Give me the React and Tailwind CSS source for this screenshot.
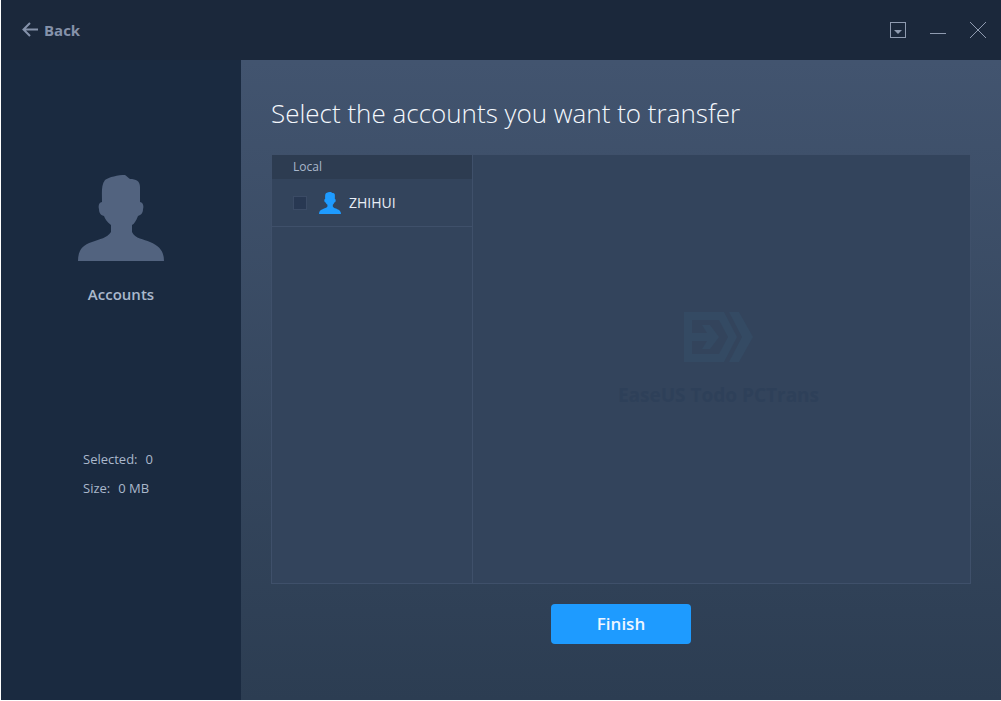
import { useState } from "react";

const accounts = [{ id: "zhihui", name: "ZHIHUI" }];

const PersonIcon = ({ className }) => (
  <svg viewBox="0 0 86 86" className={className} fill="currentColor" aria-hidden="true">
    <path d="M24 27C24 18 23 10 27 5C31 2 40 0 47 0C49 1 50 3 52 4C58 4 62 6 62 12V27C65 27 66 31 65 34C65 38 63 40 60 41C58 46 56 49 54 50V57C57 64 66 64 72 67C82 71 86 77 86 86H0C0 76 4 70 14 67C22 64 29 63 33 57V50C29 47 27 44 26 41C22 40 21 37 21 34C20 31 21 27 24 27Z" />
  </svg>
);

const BrandMark = () => (
  <svg width="70" height="52" viewBox="0 0 70 52" fill="currentColor" className="text-[#344a63]" aria-hidden="true">
    <path d="M0 1H40L53 26L40 51H0V30H8V43H35L44 26L35 9H8V22H0Z" />
    <path d="M0 22H23L18 14H26L35 26L26 38H18L23 30H0Z" />
    <path d="M45 1H55L69 26L55 51H45L58 26Z" />
  </svg>
);

const TitleBar = () => (
  <header className="flex h-15 items-center justify-between bg-[#1b283b] pr-[15px] pl-[21px] text-[#8592aa]">
    <button type="button" className="flex items-center gap-[5px] text-[15px] font-bold">
      <svg width="17" height="16" viewBox="0 0 17 16" fill="none" stroke="currentColor" strokeWidth="2" aria-hidden="true">
        <path d="M8 1L1.5 7.5L8 14M1.5 7.5H16" />
      </svg>
      Back
    </button>
    <div className="flex items-center gap-6 text-[#8f9bb0]">
      <button type="button" aria-label="Menu">
        <svg width="16" height="16" viewBox="0 0 16 16" fill="none" stroke="currentColor" aria-hidden="true">
          <rect x="0.5" y="0.5" width="15" height="15" />
          <path d="M4 8H12L8 12Z" fill="currentColor" stroke="none" />
        </svg>
      </button>
      <button type="button" aria-label="Minimize">
        <svg width="16" height="16" viewBox="0 0 16 16" stroke="currentColor" aria-hidden="true">
          <path d="M0 11.5H16" />
        </svg>
      </button>
      <button type="button" aria-label="Close">
        <svg width="16" height="16" viewBox="0 0 16 16" stroke="currentColor" aria-hidden="true">
          <path d="M0 0L16 16M16 0L0 16" />
        </svg>
      </button>
    </div>
  </header>
);

const Sidebar = ({ count }) => (
  <aside className="flex w-60 shrink-0 flex-col items-center bg-[#1a2a40] pt-[115px] text-[#aab8cc]">
    <PersonIcon className="size-[86px] text-[#52637f]" />
    <h2 className="mt-[21px] text-[15px] leading-6 font-semibold">Accounts</h2>
    <dl className="mt-[139px] w-[76px] text-[13px] leading-[29px] whitespace-nowrap">
      <div className="flex gap-2">
        <dt>Selected:</dt>
        <dd>{count}</dd>
      </div>
      <div className="flex gap-2">
        <dt>Size:</dt>
        <dd>0 MB</dd>
      </div>
    </dl>
  </aside>
);

export default function App() {
  const [selected, setSelected] = useState([]);

  const toggle = (id) => {
    setSelected((prev) =>
      prev.includes(id) ? prev.filter((item) => item !== id) : [...prev, id]
    );
  };

  return (
    <div className="flex min-h-screen flex-col bg-white pb-px pl-px font-['Open_Sans','Noto_Sans',sans-serif]">
      <TitleBar />
      <div className="flex flex-1">
        <Sidebar count={selected.length} />
        <main className="flex min-w-0 flex-1 flex-col bg-linear-to-b from-[#42546f] to-[#2c3d52] px-[30px] pt-8 pb-14">
          <h1 className="text-[26px] leading-[42px] font-light text-[#f4f8fd]">
            Select the accounts you want to transfer
          </h1>

          <div className="mt-5 flex flex-1 border border-[#3f506a] bg-[#33445c]">
            <section className="w-[201px] shrink-0 border-r border-[#3f506a]">
              <h3 className="bg-[#2d3c51] pl-[21px] text-xs leading-6 text-[#aab8cc]">Local</h3>
              <ul>
                {accounts.map((account) => (
                  <li key={account.id} className="border-b border-[#3f506a]">
                    <label className="flex h-[47px] items-center pl-[21px] text-sm text-[#e9eef6]">
                      <input
                        type="checkbox"
                        checked={selected.includes(account.id)}
                        onChange={() => toggle(account.id)}
                        className="size-3.5 appearance-none border border-[#3b4b65] bg-[#283852] checked:bg-[#1e9bff]"
                      />
                      <PersonIcon className="mr-2 ml-3 size-[22px] text-[#1e9bff]" />
                      {account.name}
                    </label>
                  </li>
                ))}
              </ul>
            </section>
            <section className="flex flex-1 flex-col items-center justify-center pr-1.5 pb-4">
              <BrandMark />
              <p className="mt-4 text-[19px] leading-8 font-bold text-[#2e4059]">EaseUS Todo PCTrans</p>
            </section>
          </div>

          <button
            type="button"
            className="mt-5 h-10 w-[140px] self-center rounded-sm bg-[#1e9bff] text-[17px] font-semibold text-[#eef6ff]"
          >
            Finish
          </button>
        </main>
      </div>
    </div>
  );
}
